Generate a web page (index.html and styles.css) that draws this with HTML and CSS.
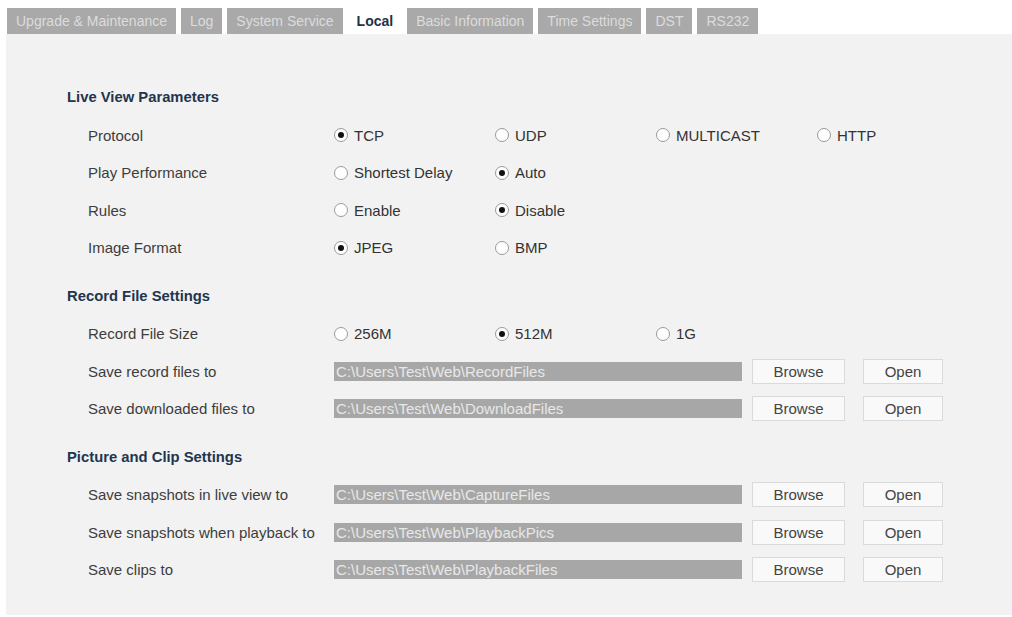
FILE: index.html
```html
<!DOCTYPE html>
<html lang="en">
<head>
<meta charset="utf-8">
<title>Local</title>
<link rel="stylesheet" href="styles.css">
</head>
<body>
<nav class="tabs">
  <div class="tab">Upgrade &amp; Maintenance</div>
  <div class="tab">Log</div>
  <div class="tab">System Service</div>
  <div class="tab active">Local</div>
  <div class="tab">Basic Information</div>
  <div class="tab">Time Settings</div>
  <div class="tab">DST</div>
  <div class="tab">RS232</div>
</nav>
<main class="panel">
  <section class="group">
    <h3 class="group-title">Live View Parameters</h3>
    <div class="row">
      <span class="label">Protocol</span>
      <label class="opt"><input type="radio" name="protocol" checked>TCP</label>
      <label class="opt"><input type="radio" name="protocol">UDP</label>
      <label class="opt"><input type="radio" name="protocol">MULTICAST</label>
      <label class="opt"><input type="radio" name="protocol">HTTP</label>
    </div>
    <div class="row">
      <span class="label">Play Performance</span>
      <label class="opt"><input type="radio" name="perf">Shortest Delay</label>
      <label class="opt"><input type="radio" name="perf" checked>Auto</label>
    </div>
    <div class="row">
      <span class="label">Rules</span>
      <label class="opt"><input type="radio" name="rules">Enable</label>
      <label class="opt"><input type="radio" name="rules" checked>Disable</label>
    </div>
    <div class="row">
      <span class="label">Image Format</span>
      <label class="opt"><input type="radio" name="fmt" checked>JPEG</label>
      <label class="opt"><input type="radio" name="fmt">BMP</label>
    </div>
  </section>
  <section class="group">
    <h3 class="group-title">Record File Settings</h3>
    <div class="row">
      <span class="label">Record File Size</span>
      <label class="opt"><input type="radio" name="size">256M</label>
      <label class="opt"><input type="radio" name="size" checked>512M</label>
      <label class="opt"><input type="radio" name="size">1G</label>
    </div>
    <div class="row">
      <span class="label">Save record files to</span>
      <div class="path">C:\Users\Test\Web\RecordFiles</div>
      <button class="btn browse">Browse</button>
      <button class="btn open">Open</button>
    </div>
    <div class="row">
      <span class="label">Save downloaded files to</span>
      <div class="path">C:\Users\Test\Web\DownloadFiles</div>
      <button class="btn browse">Browse</button>
      <button class="btn open">Open</button>
    </div>
  </section>
  <section class="group">
    <h3 class="group-title">Picture and Clip Settings</h3>
    <div class="row">
      <span class="label">Save snapshots in live view to</span>
      <div class="path">C:\Users\Test\Web\CaptureFiles</div>
      <button class="btn browse">Browse</button>
      <button class="btn open">Open</button>
    </div>
    <div class="row">
      <span class="label">Save snapshots when playback to</span>
      <div class="path">C:\Users\Test\Web\PlaybackPics</div>
      <button class="btn browse">Browse</button>
      <button class="btn open">Open</button>
    </div>
    <div class="row">
      <span class="label">Save clips to</span>
      <div class="path">C:\Users\Test\Web\PlaybackFiles</div>
      <button class="btn browse">Browse</button>
      <button class="btn open">Open</button>
    </div>
  </section>
</main>
</body>
</html>
```

FILE: styles.css
```css
* { box-sizing: border-box; }

body {
  margin: 0;
  background: #ffffff;
  font-family: "Liberation Sans", Arial, sans-serif;
  font-size: 15px;
  color: #3d3d3d;
}

.tabs {
  display: flex;
  gap: 5px;
  padding: 8px 0 0 7px;
}

.tab {
  height: 26px;
  line-height: 26px;
  padding: 0 9px;
  background: #a9a9a9;
  color: #dcdcdc;
  font-size: 14px;
  white-space: nowrap;
}

.tab.active {
  background: #ffffff;
  color: #1f3049;
  font-weight: bold;
}

.panel {
  margin-left: 6px;
  background: #f2f2f2;
  padding: 45px 0 26px 61px;
}

.group + .group {
  margin-top: 11px;
}

.group-title {
  margin: 0;
  height: 37.5px;
  line-height: 37.5px;
  font-size: 14.8px;
  font-weight: bold;
  color: #22354e;
}

.row {
  display: flex;
  align-items: center;
  height: 37.5px;
  padding-left: 21px;
}

.label {
  flex: none;
  width: 246px;
  white-space: nowrap;
}

.opt {
  flex: none;
  width: 161px;
  display: flex;
  align-items: center;
  color: #333333;
  white-space: nowrap;
}

.opt input {
  appearance: none;
  -webkit-appearance: none;
  margin: 0 6px 0 0;
  width: 14px;
  height: 14px;
  border: 1px solid #9a9a9a;
  border-radius: 50%;
  background: #ffffff;
  display: inline-grid;
  place-content: center;
}

.opt input:checked::before {
  content: "";
  width: 6px;
  height: 6px;
  border-radius: 50%;
  background: #111111;
}

.path {
  flex: none;
  width: 408px;
  height: 19px;
  line-height: 19px;
  padding-left: 2px;
  background: #a7a7a7;
  color: #e8e8e8;
  white-space: nowrap;
  overflow: hidden;
}

.btn {
  flex: none;
  height: 25px;
  border: 1px solid #dadada;
  background: #f9f9f9;
  color: #444444;
  font-family: inherit;
  font-size: 15px;
  padding: 0;
}

.browse {
  width: 93px;
  margin-left: 10px;
}

.open {
  width: 80px;
  margin-left: 18px;
}
```
